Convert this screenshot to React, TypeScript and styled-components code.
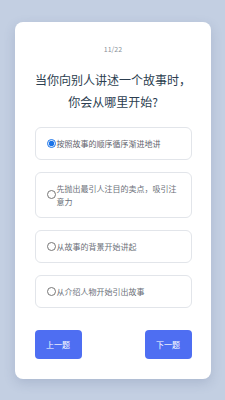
import React, { useState } from 'react';
import styled, { createGlobalStyle } from 'styled-components';

const GlobalStyle = createGlobalStyle`
  html, body {
    margin: 0;
    padding: 0;
  }
  body {
    background: #c3cfe2;
    font-family: "Noto Sans CJK SC", "Noto Sans", sans-serif;
  }
`;

const Page = styled.div`
  min-height: 100vh;
  display: flex;
  align-items: center;
  justify-content: center;
`;

const Card = styled.div`
  width: 196px;
  box-sizing: border-box;
  padding: 20px 19px 20px 20px;
  background: #ffffff;
  border-radius: 8px;
  box-shadow: 0 4px 12px rgba(60, 80, 120, 0.18);
`;

const Progress = styled.div`
  text-align: center;
  font-size: 7px;
  line-height: 12px;
  color: #8a8f98;
  margin-top: 1px;
`;

const Question = styled.h2`
  margin: 14px 0 14px;
  text-align: center;
  font-size: 12px;
  font-weight: 400;
  line-height: 22px;
  color: #2c3e50;
`;

const Options = styled.div`
  display: flex;
  flex-direction: column;
  gap: 12px;
`;

const Option = styled.label<{ $selected: boolean }>`
  display: flex;
  align-items: center;
  padding: 9px 14px 9px 11px;
  border: 1px solid #e2e5ea;
  border-radius: 6px;
  font-size: 8px;
  line-height: 13px;
  color: ${(p) => (p.$selected ? '#5f646d' : '#6b7079')};
  cursor: pointer;
`;

const Radio = styled.input`
  width: 9px;
  height: 9px;
  margin: 0 1px 0 0;
  flex-shrink: 0;
  accent-color: #1a73e8;
`;

const Footer = styled.div`
  display: flex;
  justify-content: space-between;
  margin-top: 22px;
`;

const NavButton = styled.button`
  width: 47px;
  height: 29px;
  border: none;
  border-radius: 4px;
  background: #4e6ef2;
  color: #ffffff;
  font-family: inherit;
  font-size: 8px;
  cursor: pointer;
`;

const options = [
  '按照故事的顺序循序渐进地讲',
  '先抛出最引人注目的卖点，吸引注意力',
  '从故事的背景开始讲起',
  '从介绍人物开始引出故事',
];

const App: React.FC = () => {
  const [selected, setSelected] = useState(0);

  return (
    <Page>
      <GlobalStyle />
      <Card>
        <Progress>11/22</Progress>
        <Question>
          当你向别人讲述一个故事时，
          <br />
          你会从哪里开始?
        </Question>
        <Options>
          {options.map((text, i) => (
            <Option key={text} $selected={selected === i}>
              <Radio
                type="radio"
                name="answer"
                checked={selected === i}
                onChange={() => setSelected(i)}
              />
              <span>{text}</span>
            </Option>
          ))}
        </Options>
        <Footer>
          <NavButton>上一题</NavButton>
          <NavButton>下一题</NavButton>
        </Footer>
      </Card>
    </Page>
  );
};

export default App;
